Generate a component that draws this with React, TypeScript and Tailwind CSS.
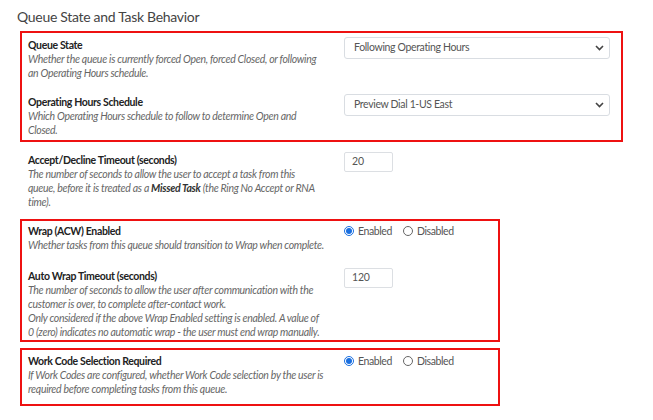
import type { ReactNode } from "react";

const FONT = "font-['Lato','Liberation_Sans',sans-serif]";

function Label({ children }: { children: ReactNode }) {
  return (
    <div className="text-[10.5px] font-bold leading-[14px] tracking-[-0.35px] text-[#222] whitespace-nowrap">
      {children}
    </div>
  );
}

function Desc({ lines }: { lines: ReactNode[] }) {
  return (
    <div className="text-[10.5px] italic leading-[14px] tracking-[-0.3px] text-[#666] whitespace-nowrap">
      {lines.map((l, i) => (
        <div key={i}>{l}</div>
      ))}
    </div>
  );
}

function Row({
  label,
  lines,
  control,
  className = "",
}: {
  label: string;
  lines: ReactNode[];
  control: ReactNode;
  className?: string;
}) {
  return (
    <div className={`flex items-start ${className}`}>
      <div className="w-[316px] shrink-0 pt-[1px]">
        <Label>{label}</Label>
        <Desc lines={lines} />
      </div>
      <div className="flex-1">{control}</div>
    </div>
  );
}

function Select({ value }: { value: string }) {
  return (
    <div className="flex h-[22px] w-[266px] items-center justify-between rounded-[3px] border border-[#d9dde2] bg-white pl-[9px] pr-[5px] text-[10.5px] tracking-[-0.35px] text-[#555]">
      <span>{value}</span>
      <svg width="9" height="6" viewBox="0 0 9 6" fill="none">
        <path d="M1 1l3.5 3.5L8 1" stroke="#444" strokeWidth="1.6" />
      </svg>
    </div>
  );
}

function NumInput({ value }: { value: string }) {
  return (
    <div className="flex h-[20px] w-[49px] items-center rounded-[2px] border border-[#dcdfe3] bg-white pl-[7px] text-[10.5px] tracking-[-0.2px] text-[#555]">
      {value}
    </div>
  );
}

function Radio({ checked, label }: { checked?: boolean; label: string }) {
  return (
    <span className="flex items-center gap-[4px] text-[10.5px] leading-[14px] tracking-[-0.4px] text-[#555]">
      {checked ? (
        <span className="flex h-[10px] w-[10px] items-center justify-center rounded-full border border-[#1a6fe0] bg-white">
          <span className="h-[6px] w-[6px] rounded-full bg-[#1a6fe0]" />
        </span>
      ) : (
        <span className="h-[10px] w-[10px] rounded-full border border-[#666] bg-white" />
      )}
      {label}
    </span>
  );
}

function RadioPair() {
  return (
    <div className="flex items-center gap-[11px] pt-[1px]">
      <Radio checked label="Enabled" />
      <Radio label="Disabled" />
    </div>
  );
}

export default function App() {
  return (
    <div className={`h-[420px] w-[653px] overflow-hidden bg-white ${FONT}`}>
      <h2 className="pl-[17px] pt-[7px] text-[14px] font-normal leading-[20px] tracking-[-0.3px] text-[#444]">
        Queue State and Task Behavior
      </h2>

      <div className="mx-[20px] mt-[4px] w-[603px] border-2 border-[#ee1111] pl-[6px] pt-[4px] pb-[3px]">
        <Row
          label="Queue State"
          lines={[
            "Whether the queue is currently forced Open, forced Closed, or following",
            "an Operating Hours schedule.",
          ]}
          control={<Select value="Following Operating Hours" />}
        />
        <Row
          className="mt-[14px]"
          label="Operating Hours Schedule"
          lines={["Which Operating Hours schedule to follow to determine Open and", "Closed."]}
          control={<Select value="Preview Dial 1-US East" />}
        />
      </div>

      <div className="mx-[20px] mt-[10px] pl-[8px]">
        <Row
          label="Accept/Decline Timeout (seconds)"
          lines={[
            "The number of seconds to allow the user to accept a task from this",
            <>
              queue, before it is treated as a <b className="text-[#333]">Missed Task</b> (the Ring No Accept or RNA
            </>,
            "time).",
          ]}
          control={<NumInput value="20" />}
        />
      </div>

      <div className="mx-[20px] mt-[10px] w-[480px] border-2 border-[#ee1111] pl-[6px] pt-[2px] pb-[1px]">
        <Row
          label="Wrap (ACW) Enabled"
          lines={["Whether tasks from this queue should transition to Wrap when complete."]}
          control={<RadioPair />}
        />
        <Row
          className="mt-[16px]"
          label="Auto Wrap Timeout (seconds)"
          lines={[
            "The number of seconds to allow the user after communication with the",
            "customer is over, to complete after-contact work.",
            "Only considered if the above Wrap Enabled setting is enabled. A value of",
            "0 (zero) indicates no automatic wrap - the user must end wrap manually.",
          ]}
          control={<NumInput value="120" />}
        />
      </div>

      <div className="mx-[20px] mt-[6px] w-[480px] border-2 border-[#ee1111] pl-[6px] pt-[3px] pb-[8px]">
        <Row
          label="Work Code Selection Required"
          lines={[
            "If Work Codes are configured, whether Work Code selection by the user is",
            "required before completing tasks from this queue.",
          ]}
          control={<RadioPair />}
        />
      </div>
    </div>
  );
}
